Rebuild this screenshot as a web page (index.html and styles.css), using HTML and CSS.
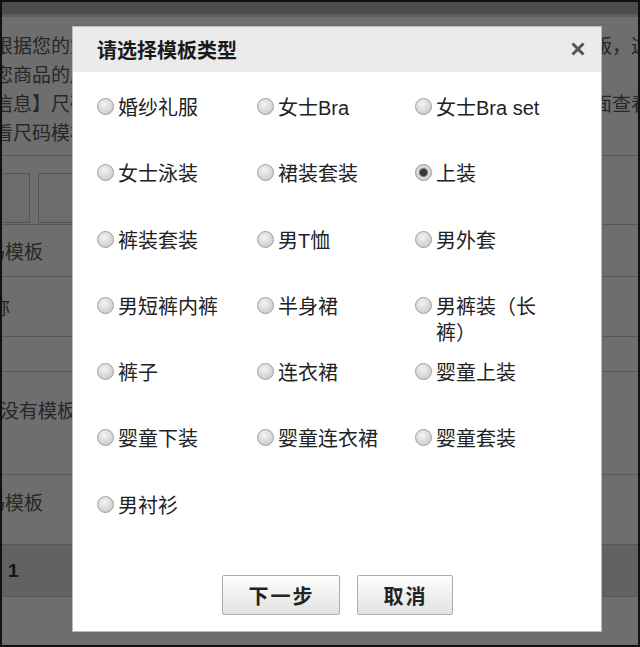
FILE: index.html
```html
<!DOCTYPE html>
<html lang="zh-CN">
<head>
<meta charset="utf-8">
<title>请选择模板类型</title>
<link rel="stylesheet" href="styles.css">
</head>
<body>
<div class="screen">
  <div class="page">
    <div class="topbar"></div>
    <div class="intro">
      <div class="line"><span class="head">根据您的宝</span><span class="tail">版，这</span></div>
      <div class="line"><span class="head">您商品的尺</span></div>
      <div class="line"><span class="head">信息】尺码</span><span class="tail">面查看</span></div>
      <div class="line"><span class="head">看尺码模板</span></div>
    </div>
    <div class="section">
      <div class="tabs">
        <div class="tab tab-first"></div>
        <div class="tab tab-second"></div>
      </div>
      <div class="row row-a"><span class="label label-tpl">码模板</span></div>
      <div class="row row-b"><span class="label label-name">名称</span></div>
      <div class="row row-c"></div>
      <div class="row row-d"><span class="label label-none">没有模板</span></div>
      <div class="row row-e"><span class="label label-tpl">码模板</span></div>
      <div class="row row-f"><span class="num">1</span></div>
    </div>
  </div>
  <div class="mask"></div>
  <div class="dialog">
    <div class="dialog-head">
      <span class="title">请选择模板类型</span>
      <svg class="close" width="16" height="14" viewBox="0 0 16 14" aria-label="关闭"><path d="M2.5 1.5 L13.5 12.5 M13.5 1.5 L2.5 12.5" stroke="#555" stroke-width="3" stroke-linecap="butt" fill="none"/></svg>
    </div>
    <div class="options">
      <label class="opt"><input type="radio" name="tpl"><span class="opt-text">婚纱礼服</span></label>
      <label class="opt"><input type="radio" name="tpl"><span class="opt-text">女士Bra</span></label>
      <label class="opt"><input type="radio" name="tpl"><span class="opt-text">女士Bra set</span></label>
      <label class="opt"><input type="radio" name="tpl"><span class="opt-text">女士泳装</span></label>
      <label class="opt"><input type="radio" name="tpl"><span class="opt-text">裙装套装</span></label>
      <label class="opt"><input type="radio" name="tpl" checked><span class="opt-text">上装</span></label>
      <label class="opt"><input type="radio" name="tpl"><span class="opt-text">裤装套装</span></label>
      <label class="opt"><input type="radio" name="tpl"><span class="opt-text">男T恤</span></label>
      <label class="opt"><input type="radio" name="tpl"><span class="opt-text">男外套</span></label>
      <label class="opt"><input type="radio" name="tpl"><span class="opt-text">男短裤内裤</span></label>
      <label class="opt"><input type="radio" name="tpl"><span class="opt-text">半身裙</span></label>
      <label class="opt"><input type="radio" name="tpl"><span class="opt-text">男裤装（长裤）</span></label>
      <label class="opt"><input type="radio" name="tpl"><span class="opt-text">裤子</span></label>
      <label class="opt"><input type="radio" name="tpl"><span class="opt-text">连衣裙</span></label>
      <label class="opt"><input type="radio" name="tpl"><span class="opt-text">婴童上装</span></label>
      <label class="opt"><input type="radio" name="tpl"><span class="opt-text">婴童下装</span></label>
      <label class="opt"><input type="radio" name="tpl"><span class="opt-text">婴童连衣裙</span></label>
      <label class="opt"><input type="radio" name="tpl"><span class="opt-text">婴童套装</span></label>
      <label class="opt"><input type="radio" name="tpl"><span class="opt-text">男衬衫</span></label>
    </div>
    <div class="dialog-foot">
      <button class="btn" type="button">下一步</button>
      <button class="btn" type="button">取消</button>
    </div>
  </div>
</div>
</body>
</html>
```
FILE: styles.css
```css
* { box-sizing: border-box; }
html, body { margin: 0; padding: 0; }
body {
  font-family: "Noto Sans CJK SC", "Liberation Sans", sans-serif;
  background: #111;
}
.screen {
  position: relative;
  width: 640px;
  height: 647px;
  border: 2px solid #111;
  overflow: hidden;
  background: #fff;
}

/* backdrop page */
.page {
  margin-left: -8px;
  width: 656px;
  color: #5a5a5a;
  font-size: 19px;
}
.topbar {
  height: 15px;
  background: #b2b2b2;
  border-bottom: 3px solid #d8d8d8;
}
.intro { margin-top: 13px; }
.line {
  display: flex;
  height: 29px;
  line-height: 29px;
  white-space: nowrap;
}
.line .tail { margin-left: auto; }
.section {
  margin-top: 9px;
  border-top: 1px solid #cdcdcd;
}
.tabs {
  display: flex;
  gap: 8px;
  height: 69px;
  padding-top: 17px;
  border-bottom: 1px solid #cdcdcd;
}
.tab {
  height: 50px;
  border: 1px solid #c6c6c6;
  background: #fbfbfb;
}
.tab-first { width: 36px; border-left: none; }
.tab-second { width: 90px; }
.row {
  display: flex;
  align-items: center;
  border-bottom: 1px solid #cdcdcd;
  white-space: nowrap;
  line-height: 29px;
}
.row-a { height: 52px; }
.row-b { height: 60px; }
.row-c { height: 35px; }
.row-d { height: 103px; align-items: flex-start; padding-top: 23px; }
.row-e { height: 70px; align-items: flex-start; padding-top: 12px; }
.row-f { height: 52px; background: #e4e4e4; }
.label-tpl { margin-left: -8px; }
.label-name { margin-left: -22px; }
.label-none { margin-left: 6px; }
.num {
  margin-left: 14px;
  font-family: "Liberation Sans", sans-serif;
  font-weight: 700;
  font-size: 19px;
  color: #333;
}

.mask {
  position: absolute;
  inset: 0;
  background: rgba(0, 0, 0, 0.57);
}

/* dialog */
.dialog {
  position: absolute;
  left: 70px;
  top: 24px;
  width: 530px;
  height: 606px;
  background: #fff;
  border: 1px solid #b9b9b9;
  display: flex;
  flex-direction: column;
}
.dialog-head {
  height: 45px;
  flex: none;
  background: #ebebeb;
  display: flex;
  align-items: center;
  justify-content: space-between;
  padding: 0 15px 0 24px;
}
.title {
  font-size: 20px;
  font-weight: 700;
  color: #1a1a1a;
  line-height: 26px;
}
.close { display: block; margin-top: -2px; }

.options {
  display: grid;
  grid-template-columns: 160px 158px 1fr;
  grid-auto-rows: 66.3px;
  padding: 23px 0 0 24px;
}
.opt {
  display: flex;
  align-items: flex-start;
  font-size: 20px;
  line-height: 26px;
  color: #222;
}
.opt-text {
  max-width: 110px;
  font-family: "Liberation Sans", "Noto Sans CJK SC", sans-serif;
}
.opt input {
  appearance: none;
  -webkit-appearance: none;
  flex: none;
  width: 17px;
  height: 17px;
  margin: 3px 4px 0 0;
  border-radius: 50%;
  border: 1px solid #9e9e9e;
  background: radial-gradient(circle at 42% 35%, #f4f4f4 0, #dadada 50%, #c2c2c2 100%);
}
.opt input:checked {
  border-color: #979797;
  background: radial-gradient(circle at 50% 50%, #333 0, #3c3c3c 3.2px, #8a8a8a 4.2px, #dcdcdc 5.2px, #c8c8c8 100%);
}

.dialog-foot {
  margin-top: auto;
  display: flex;
  justify-content: center;
  gap: 17px;
  padding-bottom: 16px;
}
.btn {
  height: 40px;
  padding: 0 24px 0 26px;
  font-family: "Noto Sans CJK SC", sans-serif;
  font-size: 20px;
  font-weight: 700;
  letter-spacing: 2px;
  color: #222;
  border: 1px solid #acacac;
  border-radius: 2px;
  background: linear-gradient(#fefefe, #e2e2e2);
}
```
